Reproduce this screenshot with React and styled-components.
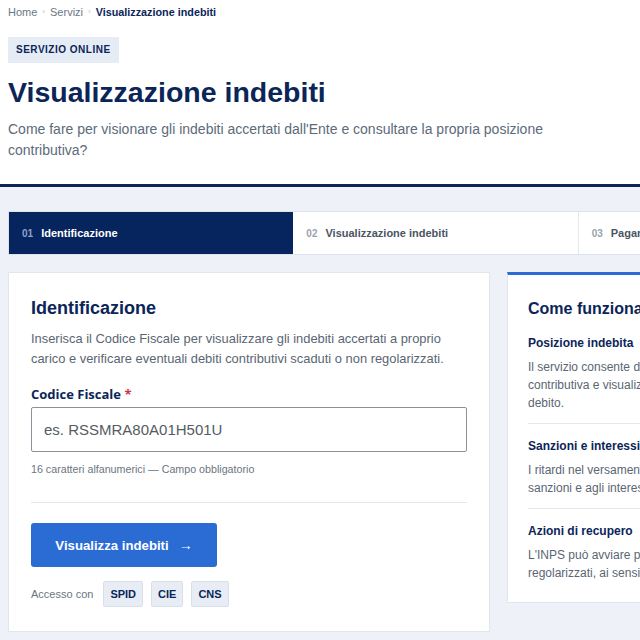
import React from 'react';
import styled, { createGlobalStyle } from 'styled-components';

const GlobalStyle = createGlobalStyle`
  html, body {
    margin: 0;
    padding: 0;
    overflow: hidden;
    background: #eef2f8;
    font-family: "Liberation Sans", Arial, sans-serif;
  }
`;

const steps = [
  { n: '01', label: 'Identificazione', active: true },
  { n: '02', label: 'Visualizzazione indebiti' },
  { n: '03', label: 'Pagamento e regolarizzazione' },
];

const infoItems = [
  {
    title: 'Posizione indebita',
    lines: [
      'Il servizio consente di verificare la propria posizione',
      'contributiva e visualizzare gli importi posti a',
      'debito.',
    ],
  },
  {
    title: 'Sanzioni e interessi',
    lines: [
      'I ritardi nel versamento dei contributi danno luogo alle',
      'sanzioni e agli interessi previsti dalla normativa.',
    ],
  },
  {
    title: 'Azioni di recupero',
    lines: [
      "L'INPS può avviare procedure di recupero per i debiti non",
      'regolarizzati, ai sensi di legge.',
    ],
  },
];

export default function App() {
  return (
    <>
      <GlobalStyle />
      <Header>
        <Breadcrumb>
          <Crumb>Home</Crumb>
          <Sep>›</Sep>
          <Crumb>Servizi</Crumb>
          <Sep>›</Sep>
          <Crumb current>Visualizzazione indebiti</Crumb>
        </Breadcrumb>
        <Badge>SERVIZIO ONLINE</Badge>
        <Title>Visualizzazione indebiti</Title>
        <Lead>
          Come fare per visionare gli indebiti accertati dall'Ente e consultare la propria posizione
          contributiva?
        </Lead>
      </Header>

      <Main>
        <Stepper>
          {steps.map((s) => (
            <Step key={s.n} active={s.active}>
              <StepNum active={s.active}>{s.n}</StepNum>
              <StepLabel active={s.active}>{s.label}</StepLabel>
            </Step>
          ))}
        </Stepper>

        <Columns>
          <FormCard>
            <CardTitle>Identificazione</CardTitle>
            <Intro>
              Inserisca il Codice Fiscale per visualizzare gli indebiti accertati a proprio
              carico e verificare eventuali debiti contributivi scaduti o non regolarizzati.
            </Intro>
            <Label htmlFor="cf">
              Codice Fiscale <Req>*</Req>
            </Label>
            <Input id="cf" type="text" placeholder="es. RSSMRA80A01H501U" />
            <Hint>16 caratteri alfanumerici — Campo obbligatorio</Hint>
            <Divider />
            <Button type="button">Visualizza indebiti<Arrow>→</Arrow></Button>
            <Access>
              <AccessLabel>Accesso con</AccessLabel>
              <Chip>SPID</Chip>
              <Chip>CIE</Chip>
              <Chip>CNS</Chip>
            </Access>
          </FormCard>

          <InfoCard>
            <InfoTitle>Come funziona</InfoTitle>
            {infoItems.map((it, i) => (
              <InfoItem key={it.title} last={i === infoItems.length - 1}>
                <ItemTitle>{it.title}</ItemTitle>
                <ItemText>
                  {it.lines.map((l) => (
                    <Line key={l}>{l}</Line>
                  ))}
                </ItemText>
              </InfoItem>
            ))}
          </InfoCard>
        </Columns>
      </Main>
    </>
  );
}

const Header = styled.header`
  background: #ffffff;
  padding: 4px 8px 23px;
  border-bottom: 3px solid #0b2559;
`;

const Breadcrumb = styled.nav`
  display: flex;
  align-items: center;
  gap: 5px;
  font-size: 11px;
  line-height: 16px;
`;

const Crumb = styled.span`
  color: ${(p) => (p.current ? '#0b2559' : '#6b7785')};
  font-weight: ${(p) => (p.current ? 700 : 400)};
  font-size: ${(p) => (p.current ? '10.8px' : '11px')};
`;

const Sep = styled.span`
  color: #b6bec8;
  font-size: 8px;
`;

const Badge = styled.div`
  display: inline-block;
  margin-top: 17px;
  padding: 0 8px;
  height: 26px;
  line-height: 26px;
  background: #e6ecf5;
  color: #0b2559;
  font-size: 10px;
  font-weight: 700;
  letter-spacing: 0.5px;
`;

const Title = styled.h1`
  margin: 12px 0 0;
  font-size: 28.5px;
  line-height: 34px;
  font-weight: 700;
  color: #0b2559;
`;

const Lead = styled.p`
  margin: 10px 0 0;
  max-width: 600px;
  font-size: 14px;
  line-height: 21px;
  color: #5c6b7a;
`;

const Main = styled.main`
  padding: 24px 8px 20px;
  width: 855px;
`;

const Stepper = styled.div`
  display: grid;
  grid-template-columns: repeat(3, 1fr);
  background: #ffffff;
  border: 1px solid #dde3eb;
`;

const Step = styled.div`
  display: flex;
  align-items: center;
  gap: 8px;
  height: 42px;
  padding: 0 13px;
  background: ${(p) => (p.active ? '#06245e' : '#ffffff')};
  border-left: ${(p) => (p.active ? 'none' : '1px solid #e3e8ef')};
  &:nth-child(2) {
    border-left: none;
  }
`;

const StepNum = styled.span`
  font-size: 10px;
  font-weight: 700;
  color: ${(p) => (p.active ? '#8ea3c9' : '#9aa3ad')};
`;

const StepLabel = styled.span`
  font-size: 11px;
  font-weight: 700;
  color: ${(p) => (p.active ? '#ffffff' : '#4b5563')};
`;

const Columns = styled.div`
  display: grid;
  grid-template-columns: 482px 1fr;
  gap: 17px;
  margin-top: 17px;
  align-items: start;
`;

const FormCard = styled.section`
  background: #ffffff;
  border: 1px solid #e1e6ed;
  padding: 24px 22px 24px;
`;

const CardTitle = styled.h2`
  margin: 0;
  font-size: 18px;
  line-height: 22px;
  font-weight: 700;
  color: #0b2559;
`;

const Intro = styled.p`
  margin: 10px 0 0;
  font-size: 12.9px;
  line-height: 19.5px;
  color: #5a6673;
`;

const Label = styled.label`
  display: block;
  margin-top: 18px;
  font-family: "Open Sans", "Noto Sans", sans-serif;
  font-size: 13px;
  line-height: 17px;
  font-weight: 700;
  color: #0b2559;
`;

const Req = styled.span`
  color: #d1343a;
`;

const Input = styled.input`
  display: block;
  box-sizing: border-box;
  width: 100%;
  height: 45px;
  margin-top: 4px;
  padding: 0 12px;
  border: 1px solid #8c9299;
  border-radius: 2px;
  font-family: "Liberation Sans", Arial, sans-serif;
  font-size: 15px;
  color: #333;
  &::placeholder {
    color: #555c63;
  }
`;

const Hint = styled.div`
  margin-top: 10px;
  font-size: 10.7px;
  line-height: 14px;
  color: #6b7580;
`;

const Divider = styled.hr`
  margin: 26px 0 0;
  border: none;
  border-top: 1px solid #e3e7ec;
`;

const Button = styled.button`
  display: flex;
  align-items: center;
  justify-content: center;
  margin-top: 20px;
  width: 186px;
  height: 44px;
  border: none;
  border-radius: 3px;
  background: #2b6cd4;
  color: #ffffff;
  font-family: "Liberation Sans", Arial, sans-serif;
  font-size: 13.2px;
  font-weight: 700;
  cursor: pointer;
`;

const Arrow = styled.span`
  margin-left: 10px;
  font-size: 14px;
  font-weight: 400;
`;

const Access = styled.div`
  display: flex;
  align-items: center;
  gap: 8px;
  margin-top: 14px;
`;

const AccessLabel = styled.span`
  font-size: 11px;
  color: #6b7580;
  margin-right: 2px;
`;

const Chip = styled.span`
  display: inline-flex;
  align-items: center;
  height: 24px;
  padding: 0 6px;
  background: #e8edf5;
  border: 1px solid #d8dfe9;
  border-radius: 2px;
  font-size: 11px;
  font-weight: 700;
  color: #0b2559;
`;

const InfoCard = styled.aside`
  background: #ffffff;
  border: 1px solid #e1e6ed;
  border-top: 3px solid #2b6cd4;
  padding: 23px 20px 8px;
`;

const InfoTitle = styled.h3`
  margin: 0 0 1px;
  font-size: 16px;
  line-height: 22px;
  font-weight: 700;
  color: #0b2559;
`;

const InfoItem = styled.div`
  padding: 14px 0 ${(p) => (p.last ? '12px' : '11px')};
  border-bottom: ${(p) => (p.last ? 'none' : '1px solid #e3e7ec')};
`;

const ItemTitle = styled.h4`
  margin: 0;
  font-size: 12px;
  line-height: 16px;
  font-weight: 700;
  color: #0b2559;
`;

const ItemText = styled.p`
  margin: 7px 0 0;
  font-size: 12px;
  line-height: 18px;
  color: #5a6673;
`;

const Line = styled.span`
  display: block;
  white-space: nowrap;
`;
